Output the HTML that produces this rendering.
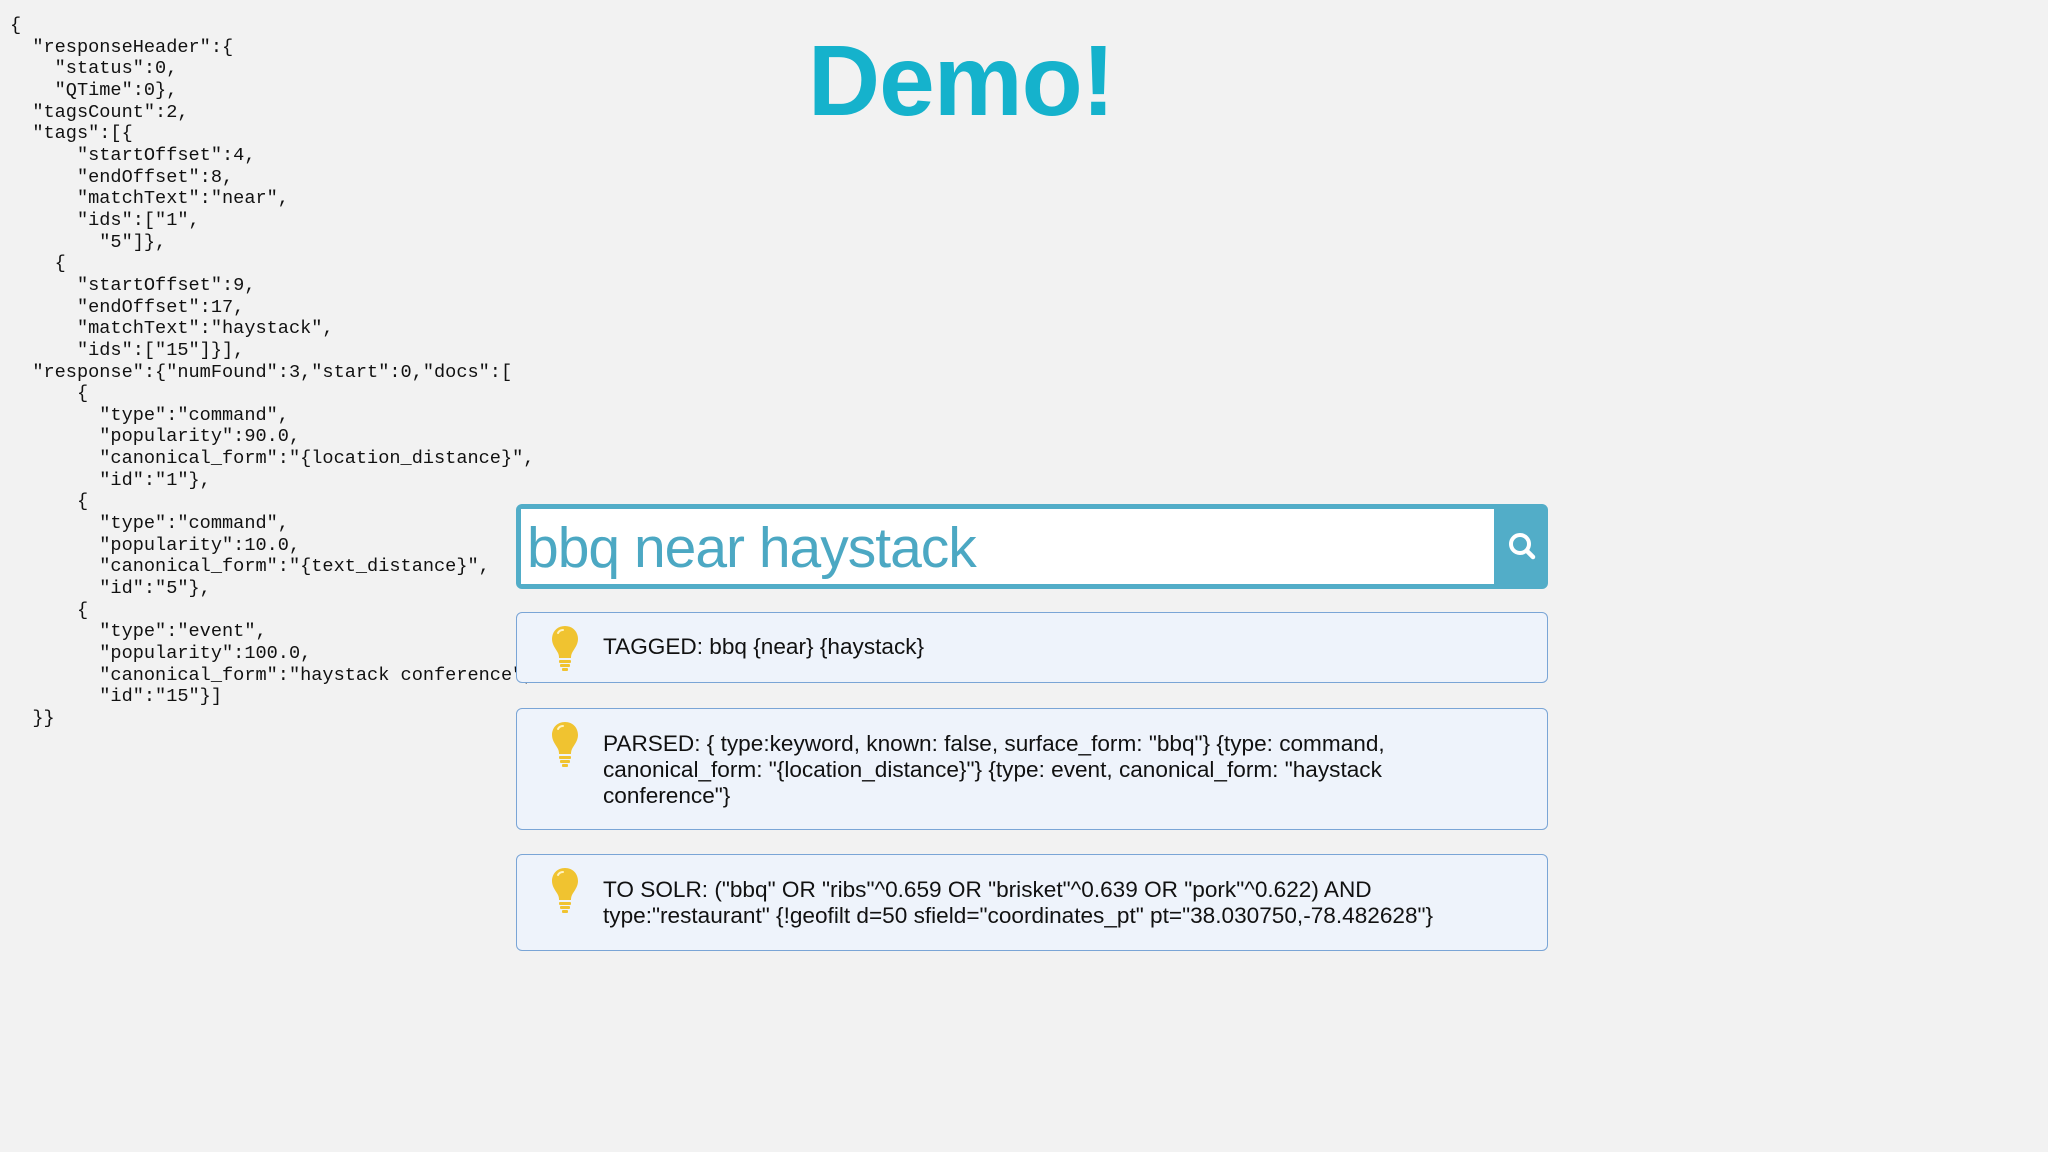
<!DOCTYPE html>
<html><head><meta charset="utf-8"><style>
html,body{margin:0;padding:0;width:2048px;height:1152px;overflow:hidden;background:#f2f2f2;}
body{position:relative;font-family:"Liberation Sans",Arial,sans-serif;}
pre{position:absolute;left:10px;top:15px;margin:0;font-family:"Liberation Mono",monospace;font-size:18.6px;line-height:21.65px;color:#111;z-index:1;}
h1{position:absolute;left:0;width:1922px;top:24px;margin:0;text-align:center;font-size:100px;font-weight:bold;color:#15b2cc;letter-spacing:-1px;}
.search{position:absolute;left:516px;top:504px;width:1032px;height:85px;background:#52adc8;border-radius:6px;z-index:2;}
.search .inp{position:absolute;left:5px;top:5px;width:973px;height:75px;background:#fff;}
.search .inp span{position:absolute;left:6px;top:6px;font-size:57px;color:#4ca8c3;letter-spacing:-1px;}
.search svg{position:absolute;left:991px;top:27px;}
.box{position:absolute;left:516px;width:1030px;background:#eef3fb;border:1.5px solid #7aa5d6;border-radius:6px;z-index:2;}
.box .t{position:absolute;left:86px;font-size:22.6px;line-height:26px;color:#111;width:900px;}
.box svg{position:absolute;left:33px;}
</style></head><body>
<pre>{
  "responseHeader":{
    "status":0,
    "QTime":0},
  "tagsCount":2,
  "tags":[{
      "startOffset":4,
      "endOffset":8,
      "matchText":"near",
      "ids":["1",
        "5"]},
    {
      "startOffset":9,
      "endOffset":17,
      "matchText":"haystack",
      "ids":["15"]}],
  "response":{"numFound":3,"start":0,"docs":[
      {
        "type":"command",
        "popularity":90.0,
        "canonical_form":"{location_distance}",
        "id":"1"},
      {
        "type":"command",
        "popularity":10.0,
        "canonical_form":"{text_distance}",
        "id":"5"},
      {
        "type":"event",
        "popularity":100.0,
        "canonical_form":"haystack conference",
        "id":"15"}]
  }}</pre>
<h1>Demo!</h1>
<div class="search"><div class="inp"><span>bbq near haystack</span></div>
<svg width="32" height="32" viewBox="0 0 32 32"><circle cx="13" cy="13" r="9" fill="none" stroke="#fff" stroke-width="4"/><path d="M20 20 L26 26" stroke="#fff" stroke-width="4.5" stroke-linecap="round"/></svg></div>

<div class="box" style="top:612px;height:69px;">
<svg style="top:12px" width="30" height="46" viewBox="0 0 30 46"><path d="M15 1C7 1 2 7 2 14c0 6 4 10 6 14 1 2 1 4 1 5h12c0-1 0-3 1-5 2-4 6-8 6-14 0-7-5-13-13-13z" fill="#f0c330"/><path d="M8 8c1-2 3-3 5-3" stroke="#fff3c0" stroke-width="2" fill="none" stroke-linecap="round"/><rect x="9" y="35" width="12" height="3" rx="1" fill="#f0c330"/><rect x="10" y="39" width="10" height="3" rx="1" fill="#f0c330"/><rect x="12" y="43" width="6" height="3" rx="1" fill="#f0c330"/></svg>
<div class="t" style="top:21px">TAGGED: bbq {near} {haystack}</div></div>

<div class="box" style="top:708px;height:120px;">
<svg style="top:12px" width="30" height="46" viewBox="0 0 30 46"><path d="M15 1C7 1 2 7 2 14c0 6 4 10 6 14 1 2 1 4 1 5h12c0-1 0-3 1-5 2-4 6-8 6-14 0-7-5-13-13-13z" fill="#f0c330"/><path d="M8 8c1-2 3-3 5-3" stroke="#fff3c0" stroke-width="2" fill="none" stroke-linecap="round"/><rect x="9" y="35" width="12" height="3" rx="1" fill="#f0c330"/><rect x="10" y="39" width="10" height="3" rx="1" fill="#f0c330"/><rect x="12" y="43" width="6" height="3" rx="1" fill="#f0c330"/></svg>
<div class="t" style="top:22px">PARSED: { type:keyword, known: false, surface_form: "bbq"} {type: command, canonical_form: "{location_distance}"} {type: event, canonical_form: "haystack conference"}</div></div>

<div class="box" style="top:854px;height:95px;">
<svg style="top:12px" width="30" height="46" viewBox="0 0 30 46"><path d="M15 1C7 1 2 7 2 14c0 6 4 10 6 14 1 2 1 4 1 5h12c0-1 0-3 1-5 2-4 6-8 6-14 0-7-5-13-13-13z" fill="#f0c330"/><path d="M8 8c1-2 3-3 5-3" stroke="#fff3c0" stroke-width="2" fill="none" stroke-linecap="round"/><rect x="9" y="35" width="12" height="3" rx="1" fill="#f0c330"/><rect x="10" y="39" width="10" height="3" rx="1" fill="#f0c330"/><rect x="12" y="43" width="6" height="3" rx="1" fill="#f0c330"/></svg>
<div class="t" style="top:22px">TO SOLR: ("bbq" OR "ribs"^0.659 OR "brisket"^0.639 OR "pork"^0.622) AND type:"restaurant" {!geofilt d=50 sfield="coordinates_pt" pt="38.030750,-78.482628"}</div></div>
</body></html>
